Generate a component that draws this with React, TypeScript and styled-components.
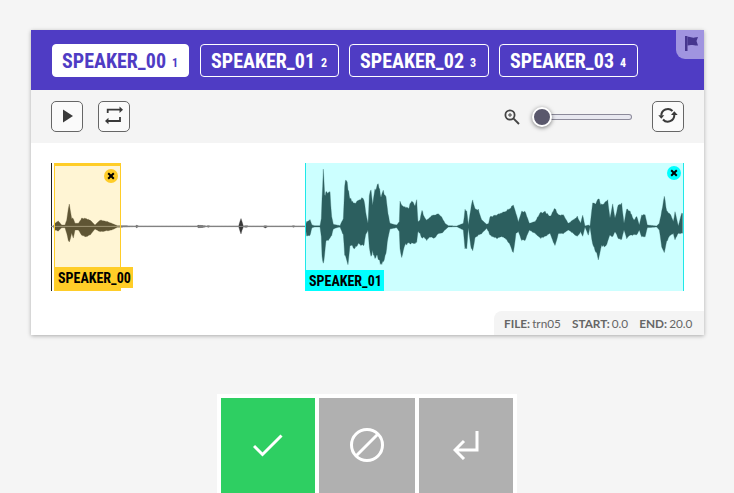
import React from "react";
import styled, { createGlobalStyle } from "styled-components";

const Global = createGlobalStyle`
  html, body { margin: 0; padding: 0; background: #f5f5f5; height: 493px; overflow: hidden; }
  * { box-sizing: border-box; }
`;

const Page = styled.div`
  height: 493px;
  overflow: hidden;
  padding-top: 30px;
  display: flex;
  flex-direction: column;
  align-items: flex-start;
`;

const Card = styled.section`
  position: relative;
  flex: none;
  margin-left: 31px;
  width: 673px;
  height: 305px;
  background: #fff;
  box-shadow: 0 1px 4px rgba(0, 0, 0, 0.3);
`;

const Header = styled.header`
  height: 60px;
  background: #4f3cc4;
  display: flex;
  align-items: center;
  gap: 10px;
  padding: 0 21px;
`;

const Pill = styled.button<{ $active?: boolean; $w: number }>`
  height: 33px;
  width: ${(p) => p.$w}px;
  flex: none;
  padding: 2px 0 0 10px;
  display: flex;
  align-items: center;
  justify-content: flex-start;
  gap: 6px;
  border: 1px solid #fff;
  border-radius: 4px;
  background: ${(p) => (p.$active ? "#fff" : "transparent")};
  color: ${(p) => (p.$active ? "#4f3cc4" : "#fff")};
  font-family: Roboto, sans-serif;
  font-stretch: 75%;
  font-weight: 700;
  font-size: 20px;
  &:first-child { margin-right: 1px; padding-left: 9px; }
`;

const PillKey = styled.span`
  font-size: 12px;
  margin-top: 4px;
`;

const FlagTab = styled.div`
  position: absolute;
  top: 0;
  right: 0;
  width: 28px;
  height: 29px;
  background: #a094e0;
  border-bottom-left-radius: 9px;
  padding: 6px 0 0 9px;
`;

const Toolbar = styled.div`
  height: 53px;
  background: #f4f4f4;
  display: flex;
  align-items: center;
  padding: 0 20px;
  gap: 15px;
`;

const IconButton = styled.button`
  width: 32px;
  height: 31px;
  flex: none;
  margin-top: -1px;
  border: 1px solid #666;
  border-radius: 5px;
  background: #fafafa;
  color: #3a3a3a;
  display: flex;
  align-items: center;
  justify-content: center;
  padding: 0;
`;

const ZoomGroup = styled.div`
  margin-left: auto;
  display: flex;
  align-items: center;
  color: #444;
`;

const Track = styled.div`
  position: relative;
  width: 105px;
  height: 6px;
  margin-left: 7px;
  margin-right: 20px;
  padding-left: 15px;
`;

const TrackBar = styled.div`
  height: 6px;
  background: #e8e8f0;
  border: 1px solid #8c8a9a;
  border-left: none;
  border-radius: 0 3px 3px 0;
`;

const Thumb = styled.div`
  position: absolute;
  left: 5px;
  top: -7px;
  width: 20px;
  height: 20px;
  border-radius: 50%;
  background: #5a586c;
  border: 2px solid #fff;
  box-shadow: 0 1px 4px rgba(0, 0, 0, 0.5);
`;

const Canvas = styled.div`
  position: relative;
  width: 633px;
  height: 128px;
  margin: 20px 0 0 20px;
  border-left: 1px solid #222;
`;

const WaveSvg = styled.svg`
  display: block;
  position: absolute;
  left: -1px;
  top: 0;
`;

const Region = styled.div<{ $left: number; $width: number; $color: string; $tint: string; $edge: number }>`
  position: absolute;
  left: ${(p) => p.$left}px;
  width: ${(p) => p.$width}px;
  top: 0;
  bottom: 0;
  background: ${(p) => p.$tint};
  border-left: 1px solid ${(p) => p.$color};
  border-right: 1px solid ${(p) => p.$color};
  border-top: ${(p) => p.$edge}px solid ${(p) => p.$color};
  border-bottom: ${(p) => p.$edge}px solid ${(p) => p.$color};
`;

const RegionLabel = styled.div<{ $color: string }>`
  position: absolute;
  left: -1px;
  bottom: 0;
  height: 21px;
  padding: 0 2px 0 4px;
  background: ${(p) => p.$color};
  color: #000;
  font-family: Roboto, sans-serif;
  font-stretch: 75%;
  font-weight: 700;
  font-size: 14px;
  line-height: 23px;
  white-space: nowrap;
`;

const CloseDot = styled.div<{ $color: string; $right: number; $top: number }>`
  position: absolute;
  right: ${(p) => p.$right}px;
  top: ${(p) => p.$top}px;
  width: 14px;
  height: 14px;
  border-radius: 50%;
  background: ${(p) => p.$color};
  display: flex;
  align-items: center;
  justify-content: center;
`;

const FileInfo = styled.div`
  position: absolute;
  right: 0;
  bottom: 0;
  width: 210px;
  height: 24px;
  background: #f4f4f4;
  border-top-left-radius: 8px;
  padding-left: 10px;
  display: flex;
  align-items: center;
  gap: 11px;
  font-family: Lato, sans-serif;
  font-size: 11.8px;
  word-spacing: -1px;
  color: #666;
  white-space: nowrap;
`;

const InfoKey = styled.b`
  font-weight: 700;
`;

const Actions = styled.div`
  flex: none;
  margin: 59px 0 0 217px;
  width: 300px;
  height: 110px;
  background: #fff;
  padding: 4px;
  display: flex;
  gap: 4px;
`;

const ActionButton = styled.button<{ $bg: string; $w: number }>`
  width: ${(p) => p.$w}px;
  height: 100%;
  border: none;
  padding: 0 0 8px;
  background: ${(p) => p.$bg};
  display: flex;
  align-items: center;
  justify-content: center;
`;

type P = [number, number, number];
const z3: P[] = [[40,213,215],[45,205,225],[55,198,228],[65,210,218],[75,210,218],[80,195,235],[85,160,255],[88,148,262],[91,165,250],[95,190,235],[100,190,250],[105,205,225],[115,205,225],[125,190,240],[135,190,245],[150,195,240],[165,210,222],[180,195,230],[195,198,228],[215,205,225],[232,212,217],[286,213,215],[290,211,218],[296,213,215],[470,213,215],[476,211,218],[490,212,217],[500,213,215],[505,212,217],[510,213,215],[596,213,215],[600,198,228],[603,190,236],[606,200,226],[610,213,216],[620,212,217],[625,213,215],[668,213,215],[676,212,219],[684,213,215],[756,213,215],[760,212,217],[765,213,215]];
const z4: P[] = [[16,213,215],[20,200,245],[30,195,240],[36,210,218],[44,212,216],[60,212,216],[64,190,245],[66,130,300],[70,45,330],[74,125,300],[78,115,260],[85,115,255],[90,115,250],[95,185,240],[100,208,222],[110,210,218],[120,212,216],[130,190,240],[134,90,300],[139,70,310],[144,100,330],[150,130,270],[165,145,280],[175,135,265],[185,130,270],[192,135,270],[197,170,240],[204,205,225],[208,120,280],[213,110,300],[218,150,290],[225,105,310],[232,90,300],[237,95,320],[243,130,325],[250,105,320],[258,130,290],[264,175,250],[270,205,222],[280,208,220],[290,210,218],[298,200,230],[300,140,280],[305,150,310],[315,155,270],[325,160,265],[335,135,265],[345,150,265],[350,135,260],[354,200,230],[360,195,235],[366,165,250],[372,185,245],[380,195,255],[392,185,245],[402,180,250],[415,175,235],[425,185,235],[435,205,225],[445,212,216],[470,213,215],[490,205,225],[495,165,280],[500,165,280],[505,210,218],[512,165,270],[518,135,290],[525,160,250],[535,165,240],[545,195,235],[560,208,220],[566,205,230]];
const z5: P[] = [[0,185,240],[20,180,250],[40,170,245],[55,165,260],[70,150,295],[78,175,235],[85,200,230],[95,170,255],[105,170,255],[118,205,225],[135,200,235],[150,175,250],[165,170,245],[180,185,235],[195,160,275],[205,180,235],[220,180,235],[235,205,225],[250,195,235],[262,185,245],[272,205,230],[278,180,245],[285,213,216],[295,210,240],[300,213,216],[308,140,270],[315,150,285],[325,130,310],[335,150,270],[345,145,275],[353,130,260],[360,190,240],[368,150,245],[375,190,230],[385,150,250],[395,145,255],[402,205,225],[410,160,250],[420,170,240],[432,195,240],[440,185,240],[448,210,225],[455,180,245],[465,180,245],[472,210,218],[500,213,216],[508,205,225],[515,170,275],[523,125,290],[530,170,260],[540,175,240],[550,200,235],[555,170,255],[565,213,235],[575,175,235],[580,175,235]];

const toPage = (pts: P[], ox: number): P[] =>
  pts.map(([x, t, b]) => [ox + x / 3 - 51, 155 + t / 3 - 163, 155 + b / 3 - 163]);

const anchors = [...toPage(z3, 40), ...toPage(z4, 300), ...toPage(z5, 490)];

// Resample the envelope at sub-pixel steps and roughen it so that the outline reads as audio.
const roughen = (pts: P[]): P[] => {
  const out: P[] = [];
  let seed = 7;
  const rnd = () => {
    seed = (seed * 16807) % 2147483647;
    return seed / 2147483647;
  };
  for (let i = 0; i < pts.length - 1; i++) {
    const [x0, t0, b0] = pts[i];
    const [x1, t1, b1] = pts[i + 1];
    const steps = Math.max(1, Math.round((x1 - x0) / 0.8));
    for (let s = 0; s < steps; s++) {
      const f = s / steps;
      const t = t0 + (t1 - t0) * f;
      const b = b0 + (b1 - b0) * f;
      const up = 63.4 - t;
      const dn = b - 63.4;
      out.push([
        x0 + (x1 - x0) * f,
        t + (up > 4 ? (rnd() - 0.5) * up * 0.12 : 0),
        b - (dn > 4 ? (rnd() - 0.5) * dn * 0.12 : 0),
      ]);
    }
  }
  return out;
};

const all = roughen(anchors);
const wavePath =
  "M" + all.map(([x, t]) => `${x.toFixed(1)} ${t.toFixed(1)}`).join("L") +
  "L" + [...all].reverse().map(([x, , b]) => `${x.toFixed(1)} ${b.toFixed(1)}`).join("L") + "Z";

const speakers: [string, number][] = [["SPEAKER_00", 137], ["SPEAKER_01", 139], ["SPEAKER_02", 140], ["SPEAKER_03", 139]];

const X = () => (
  <svg width="8" height="8" viewBox="0 0 8 8">
    <path d="M1.2 1.2L6.8 6.8M6.8 1.2L1.2 6.8" stroke="#000" strokeWidth="2" />
  </svg>
);

export default function App() {
  return (
    <Page>
      <Global />
      <Card>
        <Header>
          {speakers.map(([s, w], i) => (
            <Pill key={s} $active={i === 0} $w={w}>
              {s}
              <PillKey>{i + 1}</PillKey>
            </Pill>
          ))}
        </Header>
        <FlagTab>
          <svg width="13" height="15" viewBox="0 0 13 15" fill="#46368f">
            <path d="M0 0H2.5V15H0Z" />
            <path d="M2.5 1C5 0 7 2.5 9.5 1.5L13 1L11.5 5L13 9.5C10 10 7 8 2.5 9.5Z" />
          </svg>
        </FlagTab>
        <Toolbar>
          <IconButton>
            <svg width="12" height="14" viewBox="0 0 12 14" fill="currentColor" style={{ marginLeft: 2 }}>
              <path d="M1 0.5L11 7L1 13.5Z" />
            </svg>
          </IconButton>
          <IconButton>
            <svg width="20" height="20" viewBox="0 1 20 20" fill="none" stroke="currentColor" strokeWidth="1.8">
              <path d="M3.7 8V4.7H16" />
              <path d="M15.5 1.5L19 4.7L15.5 8Z" fill="currentColor" stroke="none" />
              <path d="M16 12V16H4" />
              <path d="M4.5 12.7L1 16L4.5 19.3Z" fill="currentColor" stroke="none" />
            </svg>
          </IconButton>
          <ZoomGroup>
            <svg width="16" height="16" viewBox="0 0 16 16" fill="none" stroke="currentColor">
              <circle cx="6" cy="6" r="4.6" strokeWidth="1.8" />
              <path d="M9.6 9.6L15 15" strokeWidth="1.9" />
              <path d="M4 6H8M6 4V8" strokeWidth="1" />
            </svg>
            <Track>
              <TrackBar />
              <Thumb />
            </Track>
            <IconButton>
              <svg width="24" height="20" viewBox="0 1 24 20" fill="none" stroke="currentColor" strokeWidth="2">
                <path d="M16.5 6A6.5 6.5 0 0 0 5.3 10.5" />
                <path d="M7 14.5A6.5 6.5 0 0 0 18.3 10" />
                <path d="M2.3 10.3H8.3L5.3 13.8Z" fill="currentColor" stroke="none" />
                <path d="M15 10H21.7L18.3 6.3Z" fill="currentColor" stroke="none" />
              </svg>
            </IconButton>
          </ZoomGroup>
        </Toolbar>
        <Canvas>
          <WaveSvg width="633" height="128" viewBox="0 0 633 128">
            <path d={wavePath} fill="#383838" stroke="#383838" strokeWidth="0.3" />
            <path d="M0 63.4H254" stroke="#888" strokeWidth="1" />
          </WaveSvg>
          <Region $left={2} $width={67} $color="#ffcd28" $tint="rgba(255,205,40,0.2)" $edge={3}>
            <RegionLabel $color="#ffcd28">SPEAKER_00</RegionLabel>
            <CloseDot $color="#ffcd28" $right={2} $top={3}><X /></CloseDot>
          </Region>
          <Region $left={253} $width={379} $color="#1fe8e8" $tint="rgba(0,255,255,0.2)" $edge={0}>
            <RegionLabel $color="#00ffff">SPEAKER_01</RegionLabel>
            <CloseDot $color="#00ffff" $right={2} $top={3}><X /></CloseDot>
          </Region>
        </Canvas>
        <FileInfo>
          <span><InfoKey>FILE:</InfoKey> trn05</span>
          <span><InfoKey>START:</InfoKey> 0.0</span>
          <span><InfoKey>END:</InfoKey> 20.0</span>
        </FileInfo>
      </Card>
      <Actions>
        <ActionButton $bg="#2ecf62" $w={94}>
          <svg width="30" height="24" viewBox="0 0 30 24" fill="none" stroke="#fff" strokeWidth="3">
            <path d="M1 13L9.5 21.5L28.5 2.5" />
          </svg>
        </ActionButton>
        <ActionButton $bg="#b0b0b0" $w={96}>
          <svg width="36" height="36" viewBox="0 0 36 36" fill="none" stroke="#fff" strokeWidth="3">
            <circle cx="18" cy="18" r="15.5" />
            <path d="M7 29L29 7" />
          </svg>
        </ActionButton>
        <ActionButton $bg="#b0b0b0" $w={94}>
          <svg width="26" height="30" viewBox="0 0 26 30" fill="none" stroke="#fff" strokeWidth="3">
            <path d="M24 1V20H3M11 11L2 20L11 29" />
          </svg>
        </ActionButton>
      </Actions>
    </Page>
  );
}
